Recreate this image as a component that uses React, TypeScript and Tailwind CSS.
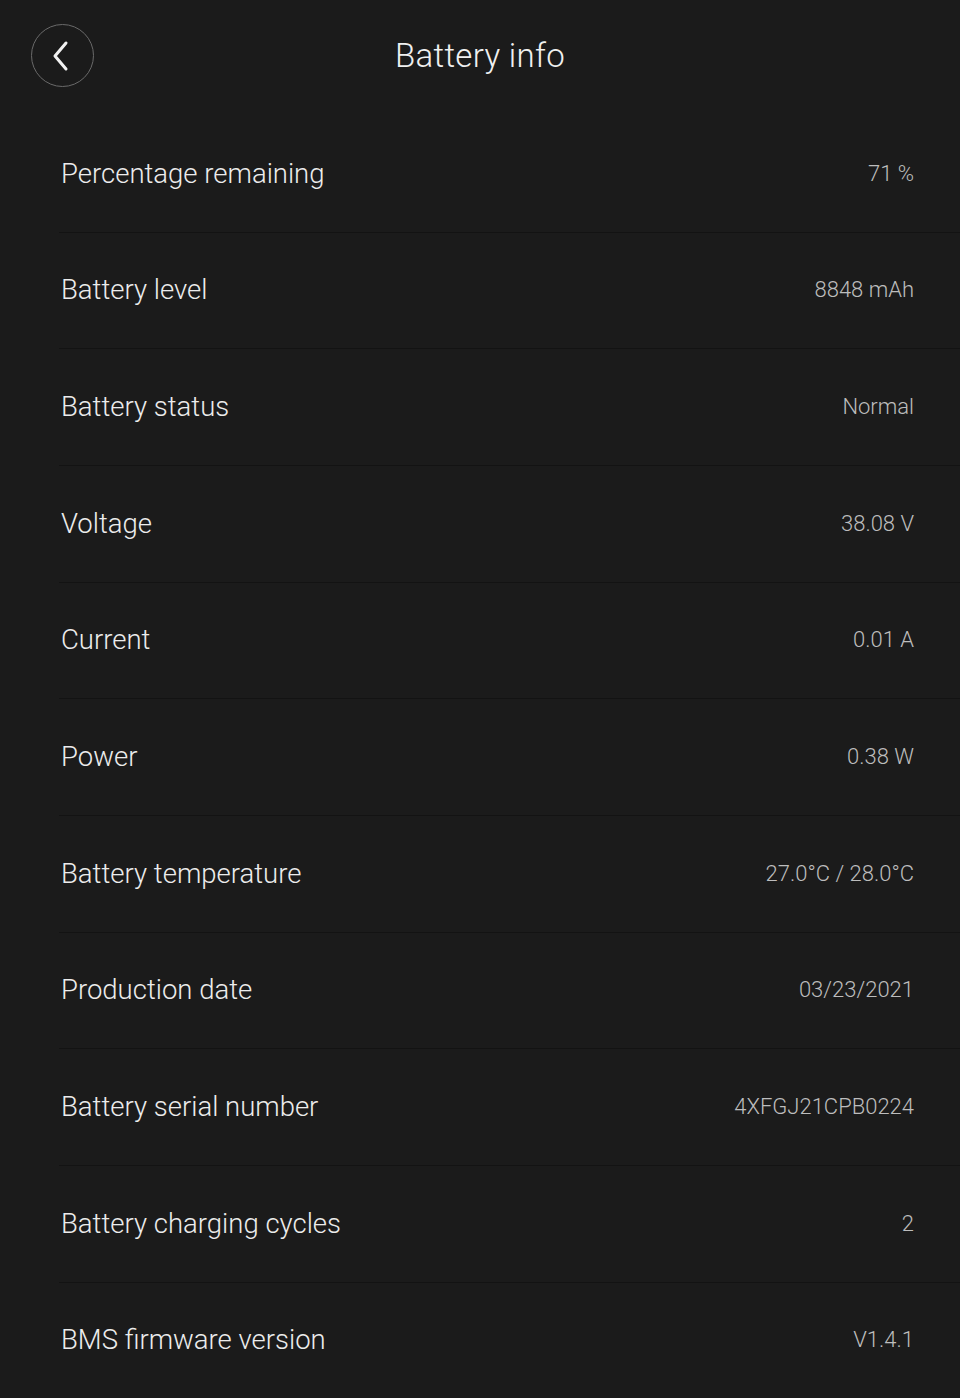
import React from 'react';

const rows: { label: string; value: string }[] = [
  { label: 'Percentage remaining', value: '71 %' },
  { label: 'Battery level', value: '8848 mAh' },
  { label: 'Battery status', value: 'Normal' },
  { label: 'Voltage', value: '38.08 V' },
  { label: 'Current', value: '0.01 A' },
  { label: 'Power', value: '0.38 W' },
  { label: 'Battery temperature', value: '27.0°C / 28.0°C' },
  { label: 'Production date', value: '03/23/2021' },
  { label: 'Battery serial number', value: '4XFGJ21CPB0224' },
  { label: 'Battery charging cycles', value: '2' },
  { label: 'BMS firmware version', value: 'V1.4.1' },
];

export default function App() {
  return (
    <div
      className="w-[960px] h-[1398px] overflow-hidden bg-[#1b1b1b]"
      style={{ fontFamily: 'Roboto, "Noto Sans", sans-serif' }}
    >
      {/* Header */}
      <div className="relative h-[116px] flex items-center justify-center">
        <button className="absolute left-[31px] top-[24px] w-[63px] h-[63px] rounded-full border-[1.5px] border-[#6a6a6a] flex items-center justify-center">
          <svg width="20" height="32" viewBox="0 0 20 32" fill="none" className="-ml-[3px]">
            <path d="M15 3 L4 16 L15 29" stroke="#f2f2f2" strokeWidth="3" strokeLinecap="round" strokeLinejoin="round" />
          </svg>
        </button>
        <h1 className="text-[33px] text-[#f0f0f0] font-light tracking-[0.3px] -mt-[4px]">Battery info</h1>
      </div>

      {/* Rows */}
      <div className="pl-[59px]">
        {rows.map((row) => (
          <div
            key={row.label}
            className="h-[116.67px] border-b border-[#131313] flex items-center justify-between pl-[2px] pr-[46px]"
          >
            <span className="text-[27.5px] text-[#ececec] font-light -mt-[1px]">{row.label}</span>
            <span className="text-[22px] text-[#bdbdbd] font-light -mt-[1px]">{row.value}</span>
          </div>
        ))}
      </div>
    </div>
  );
}
